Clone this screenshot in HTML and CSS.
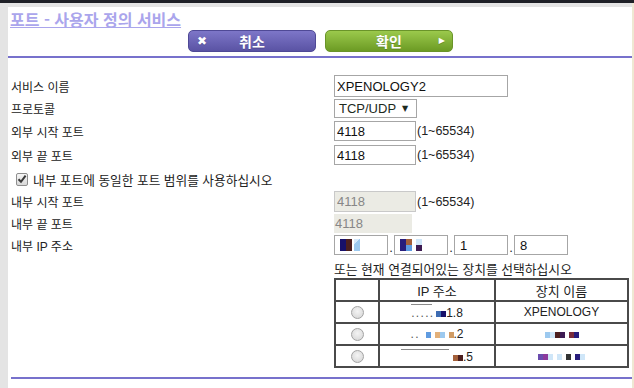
FILE: index.html
```html
<!DOCTYPE html>
<html lang="ko">
<head>
  <meta charset="UTF-8" />
  <title>포트 - 사용자 정의 서비스</title>
  <link rel="stylesheet" href="styles.css">
</head>
<body>

  <div class="topbar"></div>

  <div class="frame">
    <div class="page">

      <div class="page-head">
        <h1 class="title">포트 - 사용자 정의 서비스</h1>
        <div class="actions">
          <button class="btn btn-cancel" type="button"><span class="btn-icon">✖</span><span class="btn-text">취소</span><span></span></button>
          <button class="btn btn-apply" type="button"><span></span><span class="btn-text">확인</span><span class="btn-icon">▶</span></button>
        </div>
      </div>

      <div class="rule"></div>

      <form class="form">
        <div class="row gap-2">
          <label class="label">서비스 이름</label>
          <input class="field field-name" value="XPENOLOGY2">
        </div>

        <div class="row gap-3">
          <label class="label">프로토콜</label>
          <div class="select">TCP/UDP <span class="caret">▼</span></div>
        </div>

        <div class="row gap-4">
          <label class="label">외부 시작 포트</label>
          <div class="ctrl"><input class="field field-port" value="4118"><span class="hint">(1~65534)</span></div>
        </div>

        <div class="row gap-2">
          <label class="label">외부 끝 포트</label>
          <div class="ctrl"><input class="field field-port" value="4118"><span class="hint">(1~65534)</span></div>
        </div>

        <div class="check-row">
          <span class="checkbox">
            <svg width="10" height="10" viewBox="0 0 10 10"><path d="M1.5 5.2 L4 7.8 L8.6 1.6" fill="none" stroke="#3a3a3a" stroke-width="2"/></svg>
          </span>
          <label class="label label-check">내부 포트에 동일한 포트 범위를 사용하십시오</label>
        </div>

        <div class="row gap-2">
          <label class="label">내부 시작 포트</label>
          <div class="ctrl"><input class="field field-port field-off" value="4118" disabled><span class="hint">(1~65534)</span></div>
        </div>

        <div class="row gap-2">
          <label class="label">내부 끝 포트</label>
          <span class="readonly">4118</span>
        </div>

        <div class="row gap-3">
          <label class="label">내부 IP 주소</label>
          <div class="ip">
            <div class="field field-ip">
              <i class="px navy"></i><i class="px cocoa"></i><i class="px sky fold"></i>
            </div>
            <span class="dot">.</span>
            <div class="field field-ip">
              <i class="px indigo"></i><span class="stack"><i class="px half rust"></i><i class="px half azure"></i></span><span class="stack"><i class="px half ice"></i><i class="px half plum"></i></span>
            </div>
            <span class="dot">.</span>
            <input class="field field-ip" value="1">
            <span class="dot">.</span>
            <input class="field field-ip" value="8">
          </div>
        </div>

        <div class="note">또는 현재 연결되어있는 장치를 선택하십시오</div>

        <table class="devices">
          <thead>
            <tr>
              <th class="col-pick"></th>
              <th class="col-ip">IP 주소</th>
              <th class="col-name">장치 이름</th>
            </tr>
          </thead>
          <tbody>
            <tr>
              <td><span class="radio"></span></td>
              <td><span class="mask over">. . . . .</span><i class="px sm steel"></i><i class="px sm navy"></i>1.8</td>
              <td>XPENOLOGY</td>
            </tr>
            <tr>
              <td><span class="radio"></span></td>
              <td><span class="mask">. .</span><i class="px sm azure gap"></i><i class="px sm peach gap"></i><i class="px sm sky"></i><i class="px sm tan gap"></i>.2</td>
              <td><i class="px sm sky"></i><i class="px sm ice"></i><i class="px sm cocoa"></i><i class="px sm plum"></i><i class="px sm wine gap"></i><i class="px sm indigo"></i></td>
            </tr>
            <tr>
              <td><span class="radio"></span></td>
              <td><span class="mask over wide"></span><i class="px sm rust"></i><i class="px sm cocoa"></i>.5</td>
              <td><i class="px sm violet"></i><i class="px sm grape"></i><i class="px sm ice"></i><i class="px sm ice gap"></i><i class="px sm ink gap"></i><i class="px sm indigo gap"></i><i class="px sm ice"></i></td>
            </tr>
          </tbody>
        </table>
      </form>

      <div class="rule rule-bottom"></div>
    </div>
    <div class="edge"></div>
  </div>

</body>
</html>
```

FILE: styles.css
```css
*, *::before, *::after { box-sizing: border-box; margin: 0; padding: 0; }

body {
  width: 634px;
  height: 388px;
  overflow: hidden;
  background: #e4e4e4;
  color: #222;
  font-family: "Liberation Sans", "Noto Sans CJK KR", Arial, sans-serif;
  font-size: 13px;
}

.topbar {
  height: 3px;
  background: #1f2127;
}

.frame {
  display: flex;
  height: 385px;
  padding-top: 4px;
}

.page {
  flex: 1;
  margin-left: 8px;
  background: #fff;
}

.edge {
  width: 2px;
  margin-top: -4px;
  background: #efe8d3;
}

/* Header */
.page-head {
  padding: 2px 0 0 2px;
}

.title {
  font-family: "Noto Sans CJK KR", sans-serif;
  font-size: 16px;
  line-height: 20px;
  font-weight: bold;
  color: #aaa5ec;
  text-decoration: underline;
  text-underline-offset: 1px;
}

.actions {
  display: flex;
  gap: 9px;
  padding-left: 178px;
  margin-top: 1px;
}

.btn {
  width: 128px;
  height: 22px;
  border: 1px solid;
  border-radius: 5px;
  display: grid;
  grid-template-columns: 1fr auto 1fr;
  align-items: center;
  color: #fff;
  font-family: "Noto Sans CJK KR", sans-serif;
  font-size: 14px;
  font-weight: bold;
  line-height: 1;
  text-shadow: 0 1px 0 rgba(0,0,0,0.2);
  cursor: pointer;
}

.btn-cancel {
  background: linear-gradient(#7d76c8, #5a53a4);
  border-color: #4f4996;
}

.btn-apply {
  background: linear-gradient(#9bc94c, #6c9b24);
  border-color: #6a9429;
}

.btn-icon {
  font-family: "DejaVu Sans", sans-serif;
  font-size: 12px;
}

.btn-cancel .btn-icon { justify-self: start; padding-left: 8px; }
.btn-apply .btn-icon { justify-self: end; padding-right: 7px; font-size: 8px; }

.rule {
  height: 2px;
  margin-top: 4px;
  background: #7771cc;
}

.rule-bottom {
  margin: 9px 0 0 3px;
}

/* Form rows */
.form {
  padding: 17px 0 0 3px;
}

.row {
  display: grid;
  grid-template-columns: 323px auto;
  align-items: center;
}

.gap-2 { margin-bottom: 2px; }
.gap-3 { margin-bottom: 3px; }
.gap-4 { margin-bottom: 4px; }

.label {
  font-size: 12px;
  color: #222;
}

.label-check { font-size: 12.7px; }

.ctrl {
  display: flex;
  align-items: center;
}

.field {
  height: 20px;
  border: 1px solid #a6a6a6;
  padding: 0 2px;
  font-family: "Liberation Sans", Arial, sans-serif;
  font-size: 13px;
  color: #111;
  background: #fff;
  outline: none;
}

.field-name { width: 174px; height: 22px; }
.field-port { width: 82px; }

.field-off {
  height: 21px;
  background: #ebebe4;
  border-color: #c9c9c9;
  color: #878787;
}

.hint {
  margin-left: 1px;
  font-size: 12.5px;
}

.select {
  width: 83px;
  height: 19px;
  border: 1px solid #a6a6a6;
  display: flex;
  align-items: center;
  gap: 6px;
  padding-left: 4px;
  font-size: 13px;
  color: #1d2a1d;
}

.caret {
  font-family: "DejaVu Sans", sans-serif;
  font-size: 8px;
}

.readonly {
  width: 78px;
  height: 19px;
  display: flex;
  align-items: center;
  padding-left: 1px;
  background: #ebebe4;
  color: #878787;
}

/* Checkbox row */
.check-row {
  height: 24px;
  display: flex;
  align-items: center;
  gap: 5px;
  padding-left: 5px;
}

.checkbox {
  width: 12px;
  height: 13px;
  border: 1px solid #8e8e8e;
  border-radius: 2px;
  background: linear-gradient(#f6f6f6, #d9d9d9);
  display: flex;
  align-items: center;
  justify-content: center;
}

/* IP address */
.ip {
  display: flex;
  align-items: flex-end;
}

.field-ip {
  width: 54px;
  display: flex;
  align-items: center;
  padding-left: 5px;
}

.dot {
  width: 6px;
  text-align: center;
  line-height: 14px;
}

.px {
  display: inline-block;
  width: 6px;
  height: 12px;
}

.px.half { height: 6px; }
.px.fold { background: linear-gradient(135deg, #d6e9fa 30%, #9cc9ef 30%); margin-left: 2px; }
.stack { display: inline-flex; flex-direction: column; }
.stack + .stack { margin-left: 4px; }

.px.sm {
  width: 5px;
  height: 6px;
  vertical-align: 0;
}

.px.gap { margin-left: 4px; }

.navy { background: #17106a; }
.cocoa { background: #4c1f1e; }
.sky { background: #9cc9ef; }
.indigo { background: #281d7c; }
.rust { background: #a4603a; }
.azure { background: #5f9be0; }
.ice { background: #cfe6f8; }
.plum { background: #3d1a52; }
.steel { background: #3e6cb2; }
.peach { background: #e2b07a; }
.tan { background: #cf9b64; }
.wine { background: #7a2c3c; }
.violet { background: #6a4cae; }
.grape { background: #8c3a9c; }
.ink { background: #333; }

.note {
  height: 20px;
  display: flex;
  align-items: center;
  padding-left: 323px;
  font-size: 12.8px;
}

/* Device table */
.devices {
  margin-left: 323px;
  width: 295px;
  table-layout: fixed;
  border-collapse: separate;
  border-spacing: 0;
  border: 1px solid #4a4a4a;
  font-size: 12px;
}

.devices th,
.devices td {
  height: 22px;
  border: 1px solid #4a4a4a;
  text-align: center;
  vertical-align: middle;
  font-weight: normal;
  white-space: nowrap;
}

.devices th { font-size: 13px; }

.col-pick { width: 44px; }
.col-ip { width: 116px; }
.col-name { width: 133px; }

.radio {
  display: inline-block;
  width: 13px;
  height: 13px;
  border: 1px solid #a3a3a3;
  border-radius: 50%;
  background: radial-gradient(circle at 50% 40%, #f4f4f4, #d3d3d3);
  vertical-align: middle;
}

.mask {
  display: inline-block;
  color: #555;
  letter-spacing: -1px;
  margin-right: 4px;
}

.mask.over {
  line-height: 16px;
  border-top: 1px solid #8a8a8a;
}

.mask.wide {
  width: 48px;
  height: 12px;
  vertical-align: 0;
}
```
